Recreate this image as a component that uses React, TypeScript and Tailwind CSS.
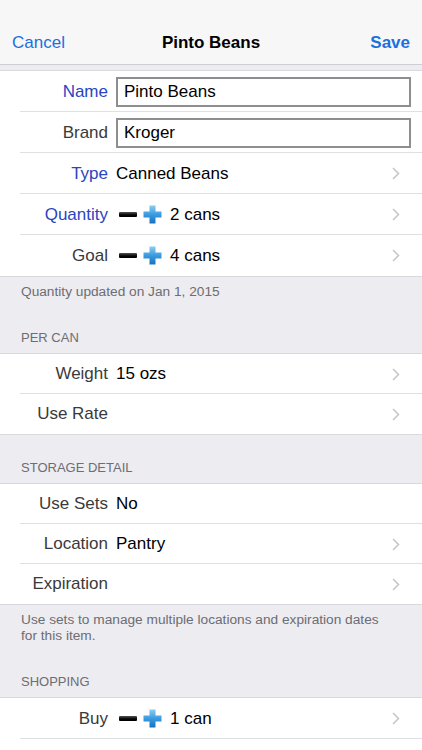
import type { ReactNode } from 'react';

const font = { fontFamily: '"Liberation Sans", Arial, sans-serif' };

function Chevron() {
  return (
    <svg width="8" height="13" viewBox="0 0 8 13" className="shrink-0">
      <polyline points="1,1 6.5,6.5 1,12" fill="none" stroke="#c7c7cc" strokeWidth="1.6" />
    </svg>
  );
}

function Stepper() {
  return (
    <div className="flex items-center gap-[6px] ml-[3px] mr-[8px]">
      <div className="w-[18px] h-[5px] rounded-[1px] bg-gradient-to-b from-[#555] via-[#111] to-[#000]" />
      <svg width="19" height="19" viewBox="0 0 19 19">
        <defs>
          <linearGradient id="plusFill" x1="0" y1="0" x2="0" y2="1">
            <stop offset="0" stopColor="#8ccdf2" />
            <stop offset="0.5" stopColor="#3a9ce0" />
            <stop offset="1" stopColor="#1a6fc0" />
          </linearGradient>
        </defs>
        <path d="M6.5 0.5h6v6h6v6h-6v6h-6v-6h-6v-6h6z" fill="url(#plusFill)" />
      </svg>
    </div>
  );
}

type RowProps = {
  label: string;
  blue?: boolean;
  tall?: boolean;
  children?: ReactNode;
  chevron?: boolean;
  last?: boolean;
};

function Row({ label, blue, tall, children, chevron, last }: RowProps) {
  return (
    <div className={`relative flex items-center pr-[22px] ${tall ? 'h-[41px]' : 'h-[40px]'}`}>
      <div className={`w-[108px] shrink-0 text-right text-[17px] ${blue ? 'text-[#2a45c0]' : 'text-[#3a3a3a]'}`}>
        {label}
      </div>
      <div className="flex-1 flex items-center pl-[8px] text-[17px] text-black min-w-0">{children}</div>
      {chevron && <Chevron />}
      {!last && <div className="absolute left-[20px] right-0 bottom-0 h-px bg-[#e0e0e4]" />}
    </div>
  );
}

function Field({ value }: { value: string }) {
  return (
    <div className="flex-1 mr-[-11px] h-[30px] border-2 border-[#8e8e8e] flex items-center pl-[6px] text-[17px] text-black">
      {value}
    </div>
  );
}

function Group({ children }: { children: ReactNode }) {
  return <div className="bg-white border-y border-[#d9d9dd]">{children}</div>;
}

function SectionHead({ title }: { title: string }) {
  return (
    <div className="px-[21px] pt-[25px] pb-[7px] text-[13px] leading-[16px] text-[#6d6d72] uppercase">{title}</div>
  );
}

function Footer({ children }: { children: ReactNode }) {
  return (
    <div className="pl-[21px] pr-[36px] pt-[7px] pb-[5px] text-[13.7px] leading-[16px] text-[#6d6d72]">{children}</div>
  );
}

export default function App() {
  return (
    <div className="w-[422px] h-[750px] overflow-hidden bg-[#ececf1]" style={font}>
      <div className="h-[65px] bg-[#f7f7f7] border-b border-[#cfcfd3] flex items-end pb-[9px] px-[12px]">
        <div className="flex-1 text-[17px] text-[#1c6fe0]">Cancel</div>
        <div className="text-[17px] font-bold text-black">Pinto Beans</div>
        <div className="flex-1 text-right text-[17px] font-bold text-[#1c6fe0]">Save</div>
      </div>

      <div className="pt-[5px]">
        <Group>
          <Row label="Name" blue tall>
            <Field value="Pinto Beans" />
          </Row>
          <Row label="Brand" tall>
            <Field value="Kroger" />
          </Row>
          <Row label="Type" blue tall chevron>Canned Beans</Row>
          <Row label="Quantity" blue tall chevron>
            <Stepper />2 cans
          </Row>
          <Row label="Goal" tall chevron last>
            <Stepper />4 cans
          </Row>
        </Group>
        <Footer>Quantity updated on Jan 1, 2015</Footer>

        <SectionHead title="Per Can" />
        <Group>
          <Row label="Weight" chevron>15 ozs</Row>
          <Row label="Use Rate" chevron last />
        </Group>

        <SectionHead title="Storage Detail" />
        <Group>
          <Row label="Use Sets">No</Row>
          <Row label="Location" chevron>Pantry</Row>
          <Row label="Expiration" chevron last />
        </Group>
        <Footer>Use sets to manage multiple locations and expiration dates for this item.</Footer>

        <SectionHead title="Shopping" />
        <div className="bg-white border-t border-[#d9d9dd] h-[200px]">
          <Row label="Buy" tall chevron>
            <Stepper />1 can
          </Row>
        </div>
      </div>
    </div>
  );
}
